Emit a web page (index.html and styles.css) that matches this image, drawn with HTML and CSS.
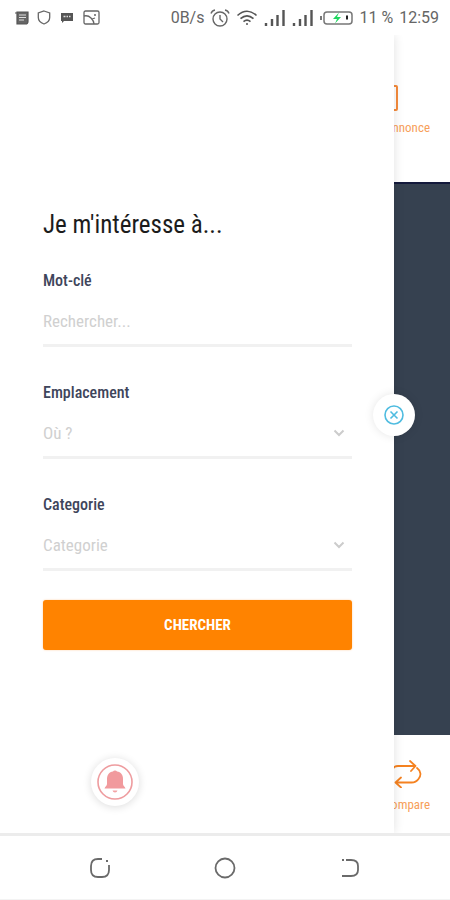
FILE: index.html
```html
<!DOCTYPE html>
<html lang="fr">
<head>
<meta charset="utf-8">
<meta name="viewport" content="width=device-width, initial-scale=1">
<title>Recherche</title>
<link rel="stylesheet" href="styles.css">
</head>
<body>
<div class="phone">
  <header class="status">
    <div class="status-group">
      <svg width="15" height="14" viewBox="0 0 15 14"><path d="M3 1h11v9.500q0 2.500-2.500 2.500H3zM1 2h2" fill="#666" stroke="#555" stroke-width="1.200"/><path d="M5 4h7M5 6.500h7M5 9h5" stroke="#ddd"/></svg>
      <svg width="14" height="15" viewBox="0 0 14 15" fill="none" stroke="#666" stroke-width="1.300"><path d="M7 1l5.700 2v4.500c0 3-2.500 5.300-5.700 6.500-3.200-1.200-5.700-3.500-5.700-6.500V3z"/></svg>
      <svg class="chat" width="12" height="10" viewBox="0 0 12 10"><path d="M0 0h12v8H3L1 10V8H0z" fill="#555"/><path d="M2.500 3.500h2m1 0h1.500m1 0h1.500" stroke="#ddd" stroke-width="1.500"/></svg>
      <svg width="17" height="15" viewBox="0 0 17 15" fill="none" stroke="#666" stroke-width="1.300"><rect x="1" y="1" width="15" height="13" rx="1.500"/><path d="M1 6q4-1 7 2t3 6M9 9l3-1M11 5h2"/></svg>
    </div>
    <div class="status-group status-right">
      <span>0B/s</span>
      <svg width="20" height="18" viewBox="0 0 20 18" fill="none" stroke="#666" stroke-width="1.400"><circle cx="10" cy="10" r="7"/><path d="M10 6v4l3 3M1 4.500q1-3 4-3.500M19 4.500q-1-3-4-3.500"/></svg>
      <svg width="22" height="16" viewBox="0 0 22 16" fill="none" stroke="#555" stroke-width="1.600"><path d="M1.500 5.500q9.500-8.500 19 0M4.500 8.700q6.500-5.800 13 0M7.500 11.700q3.500-3 7 0"/><circle cx="11" cy="14" r="1" fill="#555" stroke="none"/></svg>
      <svg width="22" height="16" viewBox="0 0 22 16" stroke="#555" stroke-width="2.400"><path d="M2 16v-3M8 16V9M13.500 16V5M19.500 16V0"/></svg>
      <svg width="22" height="16" viewBox="0 0 22 16" stroke="#555" stroke-width="2.400"><path d="M2 16v-3M8 16V9M13.500 16V5M19.500 16V0"/></svg>
      <svg width="33" height="14" viewBox="0 0 33 14"><path d="M1 5v4" stroke="#777" stroke-width="2"/><rect x="4" y="1" width="28" height="12" rx="3" fill="#fff" stroke="#777" stroke-width="1.500"/><path d="M19 1.500L13 8h4l-2 4.500L21 6h-4z" fill="#1fd65f"/><path d="M27 4.500v4" stroke="#222" stroke-width="2"/></svg>
      <span>11 %</span>
      <span>12:59</span>
    </div>
  </header>

  <main class="stage">
    <div class="page">
      <div class="page-bar page-top">
        <a class="tab" href="#annonce">
          <svg width="26" height="26" viewBox="0 0 26 26" fill="none" stroke="#f58b3c" stroke-width="2"><rect x="1" y="1" width="24" height="24" rx="1"/></svg>
          <span>Déposer annonce</span>
        </a>
      </div>
      <div class="page-body"></div>
      <div class="page-bar page-bottom">
        <a class="tab" href="#compare">
          <svg width="30" height="28" viewBox="0 0 30 28" fill="none" stroke="#f58220" stroke-width="1.800" stroke-linecap="round" stroke-linejoin="round"><path d="M1 9q1-3 5-3h17M18 1l5.500 5-4.500 5M25 8c4 3 4.500 7.500 1.500 11q-2.500 3.500-7 3.500H4M9 17.500l-5.500 5 5.500 5"/></svg>
          <span>Compare</span>
        </a>
      </div>
    </div>

    <section class="drawer">
      <form class="search">
        <h1>Je m'intéresse à...</h1>
        <div class="field">
          <label for="keyword">Mot-clé</label>
          <input class="control" id="keyword" type="text" placeholder="Rechercher...">
        </div>
        <div class="field">
          <label for="place">Emplacement</label>
          <div class="picker">
            <select class="control" id="place"><option>Où ?</option></select>
            <svg class="chevron" width="12" height="8" viewBox="0 0 12 8" fill="none" stroke="#ccc" stroke-width="2"><path d="M1.500 1.500L6 6l4.500-4.500"/></svg>
          </div>
        </div>
        <div class="field">
          <label for="category">Categorie</label>
          <div class="picker">
            <select class="control" id="category"><option>Categorie</option></select>
            <svg class="chevron" width="12" height="8" viewBox="0 0 12 8" fill="none" stroke="#ccc" stroke-width="2"><path d="M1.500 1.500L6 6l4.500-4.500"/></svg>
          </div>
        </div>
        <button class="submit" type="submit">CHERCHER</button>
      </form>
      <button class="round close" type="button" aria-label="Fermer">
        <svg width="20" height="20" viewBox="0 0 20 20" fill="none" stroke="#4fbce0" stroke-width="1.600"><circle cx="10" cy="10" r="9"/><path d="M6.500 6.500l7 7M13.500 6.500l-7 7"/></svg>
      </button>
      <button class="round bell" type="button" aria-label="Notifications">
        <svg width="38" height="38" viewBox="0 0 38 38"><circle cx="19" cy="19" r="17" fill="none" stroke="#ee9c9f" stroke-width="1.600"/><path d="M19 7.500q1.500 0 2 1C25 9 27 12 27 16v5c0 2 2 2.500 2.500 4.500h-21C9 23.500 11 23 11 21v-5c0-4 2-7 6-7.500q.5-1 2-1z" fill="#f19a9d"/><path d="M16.500 27.500h5q-.5 2-2.500 2t-2.500-2z" fill="#f3a3a5"/></svg>
      </button>
    </section>
  </main>

  <nav class="system">
    <button type="button" aria-label="Applications récentes">
      <svg width="22" height="22" viewBox="0 0 22 22" fill="none" stroke="#6a6a6a" stroke-width="1.800"><path d="M13 2H9Q2 2 2 9v4q0 7 7 7h4q7 0 7-7V8"/><path d="M17 4h2" stroke-width="2"/></svg>
    </button>
    <button type="button" aria-label="Accueil">
      <svg width="22" height="22" viewBox="0 0 22 22" fill="none" stroke="#6a6a6a" stroke-width="1.800"><circle cx="11" cy="11" r="9.500"/></svg>
    </button>
    <button type="button" aria-label="Retour">
      <svg width="22" height="22" viewBox="0 0 22 22" fill="none" stroke="#6a6a6a" stroke-width="1.800"><path d="M7 3h5q7 0 7 6v4q0 6-7 6H3M3 3h2"/></svg>
    </button>
  </nav>
</div>
</body>
</html>
```
FILE: styles.css
```css
* {
  box-sizing: border-box;
}

body {
  margin: 0;
  background: #fff;
  font-family: "Roboto Condensed", Roboto, sans-serif;
}

button {
  border: 0;
  padding: 0;
  background: none;
  font-family: inherit;
}

svg {
  display: block;
  flex: none;
}

.phone {
  display: flex;
  flex-direction: column;
  min-height: 100vh;
}

.status {
  display: flex;
  justify-content: space-between;
  align-items: center;
  height: 35px;
  padding: 0 11px 0 14px;
  color: #666;
  font-family: Roboto, sans-serif;
  font-size: 16px;
}

.status-group {
  display: flex;
  align-items: center;
  gap: 8px;
}

.status-right {
  gap: 6px;
}

.chat {
  margin: 0 2px;
}

.stage {
  position: relative;
  display: flex;
  flex: 1;
  overflow: hidden;
}

.page {
  display: flex;
  flex: 1;
  flex-direction: column;
}

.page-bar {
  display: flex;
  justify-content: flex-end;
  align-items: center;
  padding-right: 20px;
}

.page-top {
  height: 147px;
}

.page-bottom {
  height: 98px;
}

.page-body {
  flex: 1;
  border-top: 2px solid #141a3c;
  background: #364150;
}

.tab {
  display: flex;
  flex-direction: column;
  align-items: center;
  gap: 8px;
  padding-top: 5px;
  color: #f7a05a;
  font-size: 13px;
  line-height: 18px;
  text-decoration: none;
}

.drawer {
  position: absolute;
  inset: 0 auto 0 0;
  width: 88%;
  max-width: 394px;
  padding: 174px 42px 0 43px;
  background: #fff;
  box-shadow: 0 0 10px rgba(0, 0, 0, 0.12);
}

h1 {
  margin: 0 0 30px;
  color: #1c1c1c;
  font-size: 25px;
  font-weight: 400;
  line-height: 32px;
}

.field {
  margin-bottom: 36px;
}

.field label {
  display: block;
  margin-bottom: 7px;
  color: #3e455b;
  font-size: 16px;
  font-weight: 500;
  line-height: 20px;
}

.picker {
  display: grid;
  align-items: center;
}

.picker > * {
  grid-area: 1 / 1;
}

.chevron {
  justify-self: end;
  margin-right: 7px;
  margin-bottom: 3px;
  pointer-events: none;
}

.control {
  display: block;
  width: 100%;
  height: 49px;
  padding: 0;
  border: 0;
  border-bottom: 3px solid #f1f1f1;
  border-radius: 0;
  outline: 0;
  appearance: none;
  background: transparent;
  color: #d0d0d0;
  font-family: inherit;
  font-size: 17px;
}

.control::placeholder {
  color: #d0d0d0;
}

.submit {
  display: block;
  width: 100%;
  height: 50px;
  margin-top: -7px;
  border-radius: 3px;
  background: #ff8300;
  box-shadow: 0 0 2px rgba(255, 131, 0, 0.4);
  color: #fff;
  font-size: 15px;
  font-weight: 700;
}

.round {
  position: absolute;
  display: grid;
  place-items: center;
  border-radius: 50%;
  background: #fff;
}

.close {
  top: 359px;
  right: -21px;
  width: 42px;
  height: 42px;
  box-shadow: 0 0 10px rgba(0, 0, 0, 0.1);
}

.bell {
  bottom: 27px;
  left: 91px;
  width: 48px;
  height: 48px;
  box-shadow: 0 1px 8px rgba(0, 0, 0, 0.14);
}

.system {
  display: grid;
  grid-template-columns: repeat(3, 125px);
  justify-content: center;
  height: 67px;
  border-top: 3px solid #ececec;
  border-bottom: 1px solid #f3f3f3;
}

.system button {
  display: grid;
  place-items: center;
}
```
